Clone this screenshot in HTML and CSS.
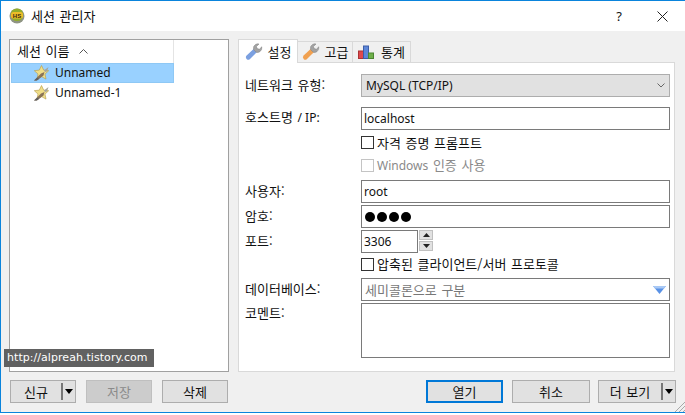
FILE: index.html
```html
<!DOCTYPE html>
<html lang="ko">
<head>
<meta charset="utf-8">
<title>세션 관리자</title>
<link rel="stylesheet" href="styles.css">
</head>
<body>
<svg class="defs" width="0" height="0">
  <defs>
    <g id="star">
      <path d="M8.500 .5l2.200 4.600 5 .6-3.700 3.400 1 5L8.500 11.600 4 14.100l1-5L1.300 5.700l5-.6z" fill="#f0de88" stroke="#b39a45" stroke-width=".6"/>
      <path d="M1 15.500 L8 8.500 L11.500 7 L10.500 10.500 L4 15.500z" fill="#8a7458"/>
      <path d="M11 5.500L15.500 2 14 6.500 12 7z" fill="#a5a59a"/>
      <path d="M1 15.500L4.500 12.500l1.500 1.500-2.500 1.500z" fill="#5f6164"/>
    </g>
    <g id="wrench">
      <path d="M1.800 16.200 Q0 14.400 1.600 12.600 L8.600 6 L11.800 9.200 L5 16 Q3.200 17.600 1.800 16.200z" fill="currentColor"/>
      <path d="M8.600 6.600 Q7.800 3 10.600 1.400 Q12.300 .6 14 1 L11.400 3.600 L12.200 5.600 L14.400 6.200 L16.800 3.800 Q17.200 6.800 15 8.600 Q13 10 11.200 9.200z" fill="#a3a3a3" stroke="#7d7d7d" stroke-width=".5"/>
    </g>
  </defs>
</svg>
<div class="window">
  <header class="titlebar">
    <svg class="app-icon" width="16" height="16" viewBox="0 0 16 16">
      <circle cx="8" cy="8" r="7.500" fill="#8f9484"/>
      <circle cx="8" cy="6.800" r="6.300" fill="#93ad2a"/>
      <rect x="2" y="4" width="12" height="6.500" rx="2.500" fill="#eebd28"/>
      <text x="8" y="9.500" class="app-icon-text">HS</text>
    </svg>
    <span class="title">세션 관리자</span>
    <span class="help lat">?</span>
    <svg class="close" width="11" height="11" viewBox="0 0 11 11"><path d="M.5.500l10 10M10.500.500l-10 10" stroke="#222" fill="none"/></svg>
  </header>

  <main class="content">
    <div class="top">
      <section class="list">
        <div class="list-col">
          <div class="list-head">세션 이름 <svg class="sort" width="9" height="5" viewBox="0 0 9 5"><path d="M.5 4.500l4-4 4 4" fill="none" stroke="#555"/></svg></div>
          <div class="item selected"><svg width="16" height="16" viewBox="0 0 16 16"><use href="#star"/></svg><span class="lat">Unnamed</span></div>
          <div class="item"><svg width="16" height="16" viewBox="0 0 16 16"><use href="#star"/></svg><span class="lat">Unnamed-1</span></div>
        </div>
      </section>

      <section class="tabs">
        <nav class="tabbar">
          <div class="tab active"><svg class="blue" width="18" height="18" viewBox="0 0 18 18"><use href="#wrench"/></svg>설정</div>
          <div class="tab adv"><svg class="orange" width="18" height="18" viewBox="0 0 18 18"><use href="#wrench"/></svg>고급</div>
          <div class="tab stats"><svg width="16" height="14" viewBox="0 0 16 14"><rect x=".5" y="6" width="5" height="7.500" fill="#e0484c" stroke="#a33"/><rect x="5.500" y="1" width="5" height="12.500" fill="#5d86d8" stroke="#3c5ea8"/><rect x="10.500" y="8" width="5" height="5.500" fill="#6fb04a" stroke="#4b8532"/></svg>통계</div>
        </nav>
        <div class="panel">
          <div class="row r-select">
            <label>네트워크 유형:</label>
            <div class="select lat">MySQL (TCP/IP)<svg width="8" height="5" viewBox="0 0 8 5"><path d="M.5.500L4 4 7.500.500" fill="none" stroke="#666"/></svg></div>
          </div>
          <div class="row r-host">
            <label>호스트명 <span class="lat">/ IP:</span></label>
            <div class="input lat">localhost</div>
          </div>
          <div class="row r-check1">
            <label></label>
            <div class="check"><i class="box"></i>자격 증명 프롬프트</div>
          </div>
          <div class="row r-check2">
            <label></label>
            <div class="check disabled"><i class="box"></i><span><span class="lat">Windows</span> 인증 사용</span></div>
          </div>
          <div class="row r-user">
            <label>사용자:</label>
            <div class="input lat">root</div>
          </div>
          <div class="row r-pass">
            <label>암호:</label>
            <div class="input dots"><i></i><i></i><i></i><i></i></div>
          </div>
          <div class="row r-port">
            <label>포트:</label>
            <div class="spin">
              <div class="input port lat">3306</div>
              <div class="spin-btns">
                <span><svg width="7" height="4" viewBox="0 0 7 4"><path d="M3.500 0L7 4H0z" fill="#222"/></svg></span>
                <span><svg width="7" height="4" viewBox="0 0 7 4"><path d="M0 0h7L3.500 4z" fill="#222"/></svg></span>
              </div>
            </div>
          </div>
          <div class="row r-check3">
            <label></label>
            <div class="check"><i class="box"></i>압축된 클라이언트/서버 프로토콜</div>
          </div>
          <div class="row r-db">
            <label>데이터베이스:</label>
            <div class="input muted">세미콜론으로 구분<svg width="13" height="8" viewBox="0 0 13 8"><path d="M0 0h13L6.500 8z" fill="#5a92e6"/><path d="M0 0h13l-2 2.500H2z" fill="#a9c9f5"/></svg></div>
          </div>
          <div class="row r-comment">
            <label>코멘트:</label>
            <div class="input area"></div>
          </div>
        </div>
      </section>
    </div>

    <footer class="buttons">
      <div class="group-left">
        <div class="btn split">신규<span class="drop"><svg width="8" height="5" viewBox="0 0 8 5"><path d="M0 0h8L4 5z" fill="#000"/></svg></span></div>
        <div class="btn off">저장</div>
        <div class="btn">삭제</div>
      </div>
      <div class="group-right">
        <div class="btn default">열기</div>
        <div class="btn wide">취소</div>
        <div class="btn wide split">더 보기<span class="drop"><svg width="8" height="5" viewBox="0 0 8 5"><path d="M0 0h8L4 5z" fill="#000"/></svg></span></div>
      </div>
    </footer>
  </main>

  <div class="tooltip">http://alpreah.tistory.com</div>
  <svg class="grip" width="11" height="11" viewBox="0 0 11 11"><path d="M11 1L1 11M11 5l-6 6M11 9l-2 2" stroke="#a8a8a8" fill="none"/></svg>
</div>
</body>
</html>
```
FILE: styles.css
```css
* { box-sizing: border-box; }
html, body { margin: 0; padding: 0; background: #fff; }
body {
  width: 685px;
  height: 415px;
  overflow: hidden;
  font: 13px/16px "Noto Sans CJK KR", "Noto Sans", sans-serif;
  word-spacing: 1px;
  color: #111;
}
.lat { font: 12px/16px "Noto Sans", sans-serif; word-spacing: 0; }
.defs { position: absolute; }
.window {
  position: relative;
  width: 685px;
  height: 413px;
  border-top: 1px solid #0a84dc;
  border-left: 1px solid #0a84dc;
  border-bottom: 1px solid #0a84dc;
  display: flex;
  flex-direction: column;
}
.titlebar {
  height: 30px;
  flex: none;
  background: #fff;
  display: flex;
  align-items: center;
  padding-left: 8px;
}
.app-icon { margin-right: 6px; }
.app-icon-text { font: bold 6px "Liberation Sans", sans-serif; text-anchor: middle; fill: #3a2a10; }
.title { flex: 1; }
.help.lat { font-size: 13px; margin-right: 35px; }
.close { margin-right: 17px; }

.content {
  flex: 1;
  background: #f0f0f0;
  padding: 8px 9px 8px 8px;
  display: flex;
  flex-direction: column;
}
.top { flex: none; height: 333px; display: flex; gap: 9px; }

.list {
  width: 220px;
  background: #fff;
  border: 1px solid #a0a0a0;
  padding: 0 1px;
}
.list-col { width: 163px; }
.list-head {
  height: 23px;
  padding-left: 6px;
  line-height: 21px;
  border-right: 1px solid #e4e4e4;
}
.sort { margin: 0 0 2px 5px; }
.item {
  height: 20px;
  display: flex;
  align-items: center;
  gap: 6px;
  padding-left: 21px;
  border: 1px solid transparent;
}
.item.selected { background: #99d1ff; border-color: #8ec8f5; }
.item svg { flex: none; }

.tabs { width: 437px; display: flex; flex-direction: column; }
.tabbar { height: 23px; display: flex; align-items: flex-end; flex: none; position: relative; z-index: 1; }
.tab {
  height: 21px;
  background: #f0f0f0;
  border: 1px solid #d9d9d9;
  border-left: none;
  border-bottom: none;
  display: flex;
  align-items: center;
  justify-content: center;
  gap: 5px;
}
.adv { width: 55px; }
.stats { width: 58px; gap: 7px; }
.tab.active {
  height: 24px;
  width: 60px;
  margin-bottom: -1px;
  background: #fff;
  border-left: 1px solid #d9d9d9;
}
.blue { color: #7ba0e0; }
.orange { color: #f0a050; }

.panel {
  flex: 1;
  background: #fff;
  border: 1px solid #d9d9d9;
  padding-left: 6px;
  padding-top: 11px;
  display: flex;
  flex-direction: column;
}
.row { display: flex; align-items: center; flex: none; }
.row label { width: 116px; flex: none; white-space: nowrap; padding-bottom: 2px; }
.row > :last-child { width: 309px; }
.r-select { height: 23px; }
.r-host { height: 23px; margin-top: 10px; }
.r-check1 { height: 15px; margin-top: 5px; }
.r-check2 { height: 14px; margin-top: 8px; }
.r-user { height: 23px; margin-top: 8px; }
.r-pass { height: 23px; margin-top: 2px; }
.r-port { height: 23px; margin-top: 2px; }
.r-check3 { height: 14px; margin-top: 4px; }
.r-db { height: 23px; margin-top: 7px; }
.r-comment { height: 55px; margin-top: 2px; align-items: flex-start; }
.r-comment label { margin-top: 2px; padding-bottom: 0; }

.select {
  height: 100%;
  background: #e1e1e1;
  border: 1px solid #adadad;
  display: flex;
  align-items: center;
  justify-content: space-between;
  padding: 0 4px;
}
.input {
  height: 100%;
  background: #fff;
  border: 1px solid #7a7a7a;
  display: flex;
  align-items: center;
  padding: 0 2px;
}
.area { height: 55px; }
.muted { color: #777; justify-content: space-between; padding: 0 3px; }
.dots { gap: 1px; padding-left: 3px; }
.dots i { width: 10px; height: 10px; border-radius: 50%; background: #000; margin-right: 1px; }
.check { display: flex; align-items: center; gap: 3px; }
.box { width: 13px; height: 13px; border: 1px solid #333; background: #fff; flex: none; }
.disabled { color: #8a8a8a; }
.disabled .box { border-color: #c4c4c4; }
.spin { display: flex; gap: 1px; height: 100%; }
.port { width: 57px; height: 23px; }
.spin-btns { display: flex; flex-direction: column; gap: 1px; }
.spin-btns span {
  width: 14px;
  height: 10px;
  background: #e1e1e1;
  border: 1px solid #c0c0c0;
  display: flex;
  align-items: center;
  justify-content: center;
}

.buttons {
  flex: 1;
  display: flex;
  justify-content: space-between;
  align-items: flex-start;
  padding: 8px 0 0 1px;
}
.group-left, .group-right { display: flex; }
.group-left { gap: 10px; }
.group-right { gap: 8px; }
.btn {
  height: 23px;
  width: 66px;
  background: #e1e1e1;
  border: 1px solid #adadad;
  display: flex;
  align-items: center;
  justify-content: center;
  position: relative;
}
.wide { width: 78px; }
.off { background: #cccccc; border-color: #bfbfbf; color: #8a8a8a; }
.default { width: 77px; border: 2px solid #0078d7; margin-right: 1px; }
.split { padding-right: 14px; }
.drop {
  position: absolute;
  right: 0;
  top: 2px;
  bottom: 2px;
  width: 14px;
  border-left: 2px solid #777;
  display: flex;
  align-items: center;
  justify-content: center;
}
.tooltip {
  position: absolute;
  left: 3px;
  top: 348px;
  width: 150px;
  height: 18px;
  background: #616161;
  color: #fff;
  font: 11px/17px "DejaVu Sans", sans-serif;
  letter-spacing: .05px;
  padding-left: 3px;
  white-space: nowrap;
  overflow: hidden;
}
.grip { position: absolute; right: 0; bottom: 0; }
```
